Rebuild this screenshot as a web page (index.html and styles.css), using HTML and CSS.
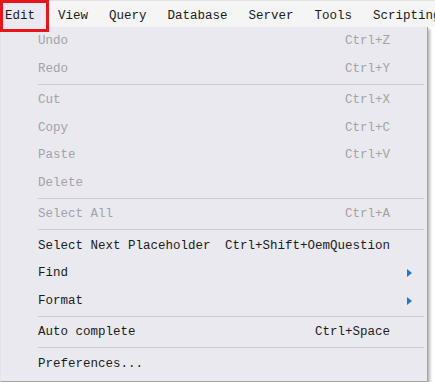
FILE: index.html
```html
<!DOCTYPE html>
<html lang="en">

<head>
  <meta charset="UTF-8">
  <meta name="viewport" content="width=device-width, initial-scale=1.0">
  <title>Edit Menu</title>
  <link rel="stylesheet" href="styles.css">
</head>

<body>
  <div class="menubar">
    <div class="menubar-item open">Edit</div>
    <div class="menubar-item">View</div>
    <div class="menubar-item">Query</div>
    <div class="menubar-item">Database</div>
    <div class="menubar-item">Server</div>
    <div class="menubar-item">Tools</div>
    <div class="menubar-item">Scripting</div>
  </div>
  <div class="highlight-box"></div>

  <div class="dropdown">
    <div class="menu-row disabled"><span class="label">Undo</span><span class="keys">Ctrl+Z</span><span class="arrow"></span></div>
    <div class="menu-row disabled"><span class="label">Redo</span><span class="keys">Ctrl+Y</span><span class="arrow"></span></div>
    <div class="separator"></div>
    <div class="menu-row disabled"><span class="label">Cut</span><span class="keys">Ctrl+X</span><span class="arrow"></span></div>
    <div class="menu-row disabled"><span class="label">Copy</span><span class="keys">Ctrl+C</span><span class="arrow"></span></div>
    <div class="menu-row disabled"><span class="label">Paste</span><span class="keys">Ctrl+V</span><span class="arrow"></span></div>
    <div class="menu-row disabled"><span class="label">Delete</span><span class="keys"></span><span class="arrow"></span></div>
    <div class="separator"></div>
    <div class="menu-row disabled"><span class="label">Select All</span><span class="keys">Ctrl+A</span><span class="arrow"></span></div>
    <div class="separator"></div>
    <div class="menu-row"><span class="label">Select Next Placeholder</span><span class="keys">Ctrl+Shift+OemQuestion</span><span class="arrow"></span></div>
    <div class="menu-row"><span class="label">Find</span><span class="keys"></span><span class="arrow"><span class="triangle"></span></span></div>
    <div class="menu-row"><span class="label">Format</span><span class="keys"></span><span class="arrow"><span class="triangle"></span></span></div>
    <div class="separator"></div>
    <div class="menu-row"><span class="label">Auto complete</span><span class="keys">Ctrl+Space</span><span class="arrow"></span></div>
    <div class="separator"></div>
    <div class="menu-row"><span class="label">Preferences...</span><span class="keys"></span><span class="arrow"></span></div>
  </div>
</body>

</html>
```

FILE: styles.css
```css
body {
  margin: 0;
  padding: 0;
  background-color: #ffffff;
  font-family: "Liberation Mono", "DejaVu Sans Mono", monospace;
  font-size: 12.5px;
  color: #1b1b1b;
  position: relative;
}

.menubar {
  display: flex;
  height: 27px;
  background-color: #f5f5f6;
  border-top: 1px solid #e2e2e6;
  box-sizing: border-box;
  white-space: nowrap;
  overflow: hidden;
}

.menubar-item {
  padding: 2px 10.5px 0;
  line-height: 26px;
}

.menubar-item.open {
  padding: 2px 11.5px 0 2px;
  margin-left: 2px;
  background-color: #e9e9ef;
  border-left: 1px solid #cfcfd6;
  border-right: 1px solid #cfcfd6;
}

.highlight-box {
  position: absolute;
  left: 0;
  top: 0;
  width: 49px;
  height: 32px;
  border: 3px solid #e8141c;
  box-sizing: border-box;
}

.dropdown {
  width: 428px;
  box-sizing: border-box;
  background-color: #e9e9ef;
  border: 1px solid #a3a3a8;
  border-top: none;
  border-left: 1px solid #e3e3e8;
  padding-bottom: 4px;
  box-shadow: 2px 2px 3px rgba(0, 0, 0, 0.3);
}

.menu-row {
  display: grid;
  grid-template-columns: 1fr auto 37px;
  align-items: center;
  height: 27.5px;
  padding-left: 37px;
  padding-top: 1px;
  box-sizing: border-box;
  white-space: nowrap;
}

.menu-row.disabled {
  color: #a3a3a6;
}

.arrow {
  display: flex;
  align-items: center;
  padding-left: 17px;
}

.triangle {
  width: 0;
  height: 0;
  border-top: 4px solid transparent;
  border-bottom: 4px solid transparent;
  border-left: 5px solid #1e78d2;
}

.separator {
  height: 1px;
  margin: 1.5px 3px 1.5px 37px;
  background-color: #cbcbd4;
}
```
